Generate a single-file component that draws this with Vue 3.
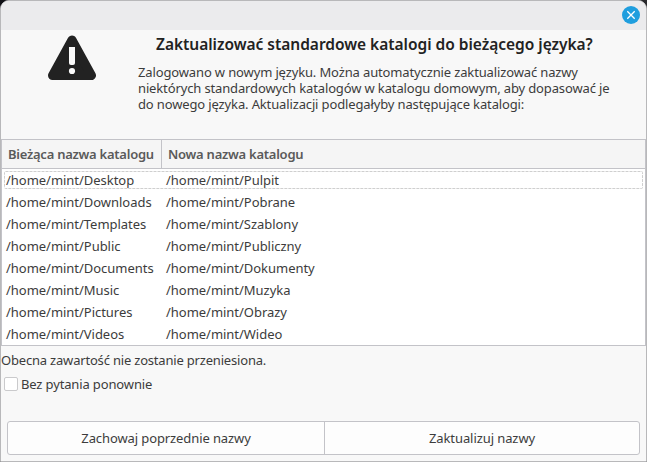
<script setup>
import { ref } from 'vue'

const skipPrompt = ref(false)
const message = [
  'Zalogowano w nowym języku. Można automatycznie zaktualizować nazwy',
  'niektórych standardowych katalogów w katalogu domowym, aby dopasować je',
  'do nowego języka. Aktualizacji podlegałyby następujące katalogi:',
]
const folders = [
  ['Desktop', 'Pulpit'],
  ['Downloads', 'Pobrane'],
  ['Templates', 'Szablony'],
  ['Public', 'Publiczny'],
  ['Documents', 'Dokumenty'],
  ['Music', 'Muzyka'],
  ['Pictures', 'Obrazy'],
  ['Videos', 'Wideo'],
]
</script>

<template>
  <div class="desktop">
    <div class="window">
      <header class="titlebar">
        <button class="close" aria-label="Zamknij">
          <svg width="18" height="18" viewBox="0 0 18 18">
            <circle cx="9" cy="9" r="9" fill="#1f9ede" />
            <path d="M5.300 5.300l7.400 7.400M12.700 5.300l-7.400 7.400" stroke="#fff" stroke-width="1.300" fill="none" />
          </svg>
        </button>
      </header>

      <section class="intro">
        <svg class="warning" width="48" height="46" viewBox="0 0 48 46">
          <path d="M24 5L43.500 40.500H4.500z" fill="#222" stroke="#222" stroke-width="9" stroke-linejoin="round" />
          <path d="M21 12h6v16q0 2-2 2h-2q-2 0-2-2z" fill="#fafafa" />
          <circle cx="24" cy="36" r="3.100" fill="#fafafa" />
        </svg>
        <div class="copy">
          <h1>Zaktualizować standardowe katalogi do bieżącego języka?</h1>
          <p v-for="line in message" :key="line">{{ line }}</p>
        </div>
      </section>

      <section class="list">
        <div class="row head">
          <div class="cell first">Bieżąca nazwa katalogu</div>
          <div class="cell">Nowa nazwa katalogu</div>
        </div>
        <div v-for="(pair, i) in folders" :key="pair[0]" class="row">
          <svg v-if="i === 0" class="focus" width="639" height="18">
            <rect x="0.500" y="0.500" width="638" height="17" rx="1" fill="none" stroke="#cfcfcf" stroke-dasharray="3 1" />
          </svg>
          <div class="cell first">/home/mint/{{ pair[0] }}</div>
          <div class="cell">/home/mint/{{ pair[1] }}</div>
        </div>
      </section>

      <p class="note">Obecna zawartość nie zostanie przeniesiona.</p>
      <label class="check">
        <input v-model="skipPrompt" type="checkbox" />
        <span>Bez pytania ponownie</span>
      </label>

      <footer class="actions">
        <button class="keep">Zachowaj poprzednie nazwy</button>
        <button class="update">Zaktualizuj nazwy</button>
      </footer>
    </div>
  </div>
</template>

<style>
body {
  margin: 0;
}
</style>

<style scoped>
.desktop {
  width: 647px;
  height: 462px;
  background: linear-gradient(90deg, #111116 50%, #2a2a2d 50%);
}
.window {
  box-sizing: border-box;
  height: 462px;
  display: flex;
  flex-direction: column;
  overflow: hidden;
  border: 1px solid #b8b8ba;
  border-radius: 9px 9px 0 0;
  background: #f8f8f8;
  color: #3c3c3c;
  font-family: "Noto Sans", "Open Sans", sans-serif;
  font-size: 13px;
}
p,
h1 {
  margin: 0;
  white-space: nowrap;
}
.titlebar {
  box-sizing: border-box;
  height: 29px;
  flex: none;
  display: flex;
  justify-content: flex-end;
  padding: 5px 6px 0 0;
  background: #ebebed;
}
button {
  font: inherit;
  color: inherit;
  padding: 0;
  border: 0;
  background: none;
}
.close {
  width: 18px;
  height: 18px;
}
.close svg {
  display: block;
}
.intro {
  display: flex;
  height: 109px;
  flex: none;
}
.warning {
  flex: none;
  margin: 5px 42px 0 47px;
}
.copy p {
  height: 16px;
  line-height: 16px;
  letter-spacing: -0.135px;
}
h1 {
  height: 34px;
  padding-left: 18px;
  line-height: 28px;
  font-size: 15.5px;
  font-weight: 600;
  letter-spacing: -0.02px;
  color: #222;
}
.list {
  box-sizing: border-box;
  flex: none;
  height: 207px;
  border: 1px solid #c3c3c8;
  background: #fff;
}
.row {
  position: relative;
  display: flex;
  height: 22px;
  line-height: 22px;
  letter-spacing: -0.03px;
  white-space: nowrap;
}
.cell {
  padding-left: 4px;
}
.first {
  box-sizing: border-box;
  width: 160px;
}
.head {
  box-sizing: border-box;
  height: 29px;
  line-height: 28px;
  border-bottom: 1px solid #c3c3c8;
  background: #f5f5f5;
  color: #5a5a5a;
  font-weight: 600;
  letter-spacing: -0.25px;
}
.head .cell {
  padding-left: 6px;
}
.head .first {
  border-right: 1px solid #c3c3c8;
}
.focus {
  position: absolute;
  left: 2px;
  top: 2px;
}
.note {
  height: 28px;
  line-height: 28px;
  letter-spacing: -0.19px;
}
.check {
  display: flex;
  align-items: center;
  height: 20px;
  padding-left: 3px;
  gap: 3px;
  letter-spacing: -0.14px;
}
.check input {
  appearance: none;
  box-sizing: border-box;
  width: 14px;
  height: 14px;
  margin: 0;
  border: 1px solid #cacacc;
  border-radius: 2px;
  background: #fff;
}
.actions {
  box-sizing: border-box;
  display: flex;
  height: 34px;
  width: 633px;
  margin: 27px 0 0 6px;
  border: 1px solid #c3c3c8;
  border-radius: 3px;
  background: #fdfdfd;
}
.keep {
  box-sizing: border-box;
  width: 317px;
  border-right: 1px solid #c3c3c8;
  letter-spacing: -0.1px;
}
.update {
  flex: 1;
  letter-spacing: -0.08px;
}
</style>
